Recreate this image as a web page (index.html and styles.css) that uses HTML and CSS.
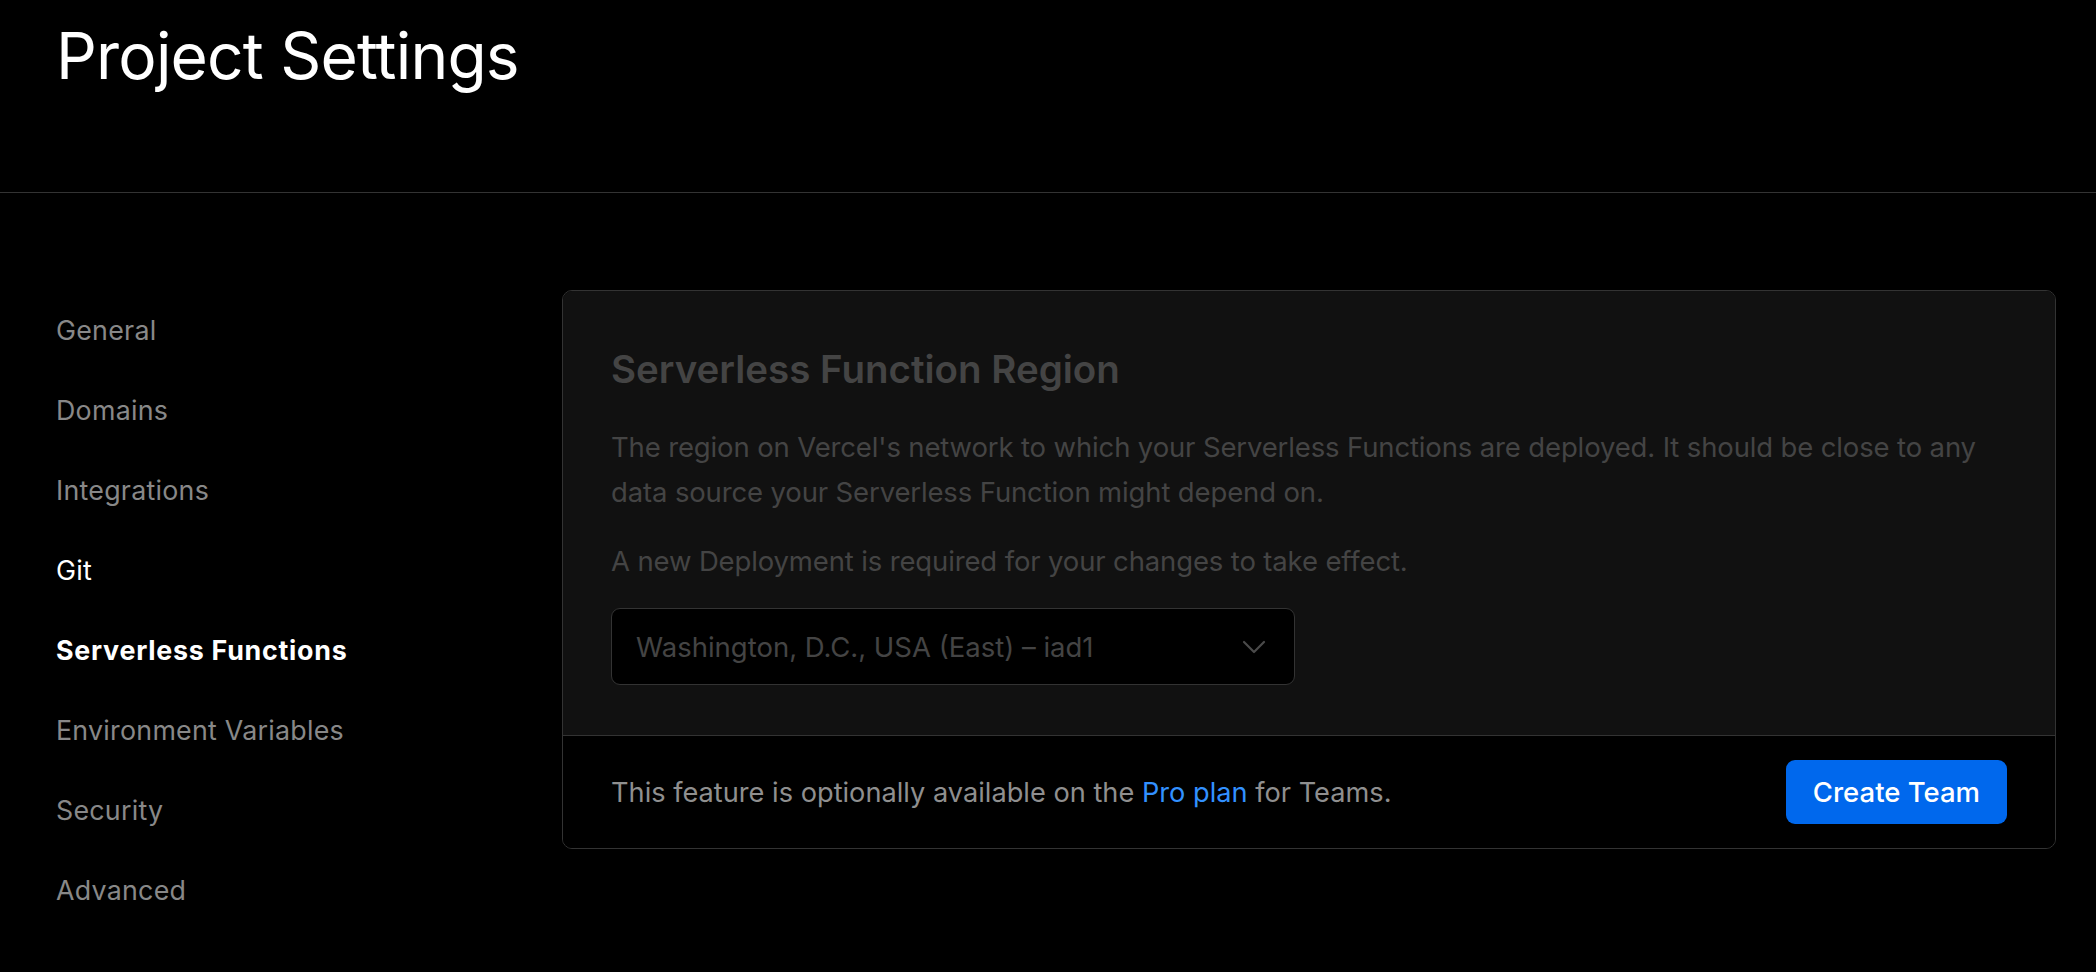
FILE: index.html
```html
<!DOCTYPE html>
<html lang="en">
<head>
<meta charset="utf-8">
<title>Project Settings</title>
<link rel="stylesheet" href="styles.css">
</head>
<body>
<header class="page-header">
  <h1 class="page-title">Project Settings</h1>
</header>
<div class="layout">
  <nav class="sidebar">
    <a class="nav-item">General</a>
    <a class="nav-item">Domains</a>
    <a class="nav-item">Integrations</a>
    <a class="nav-item nav-item--light">Git</a>
    <a class="nav-item nav-item--active">Serverless Functions</a>
    <a class="nav-item">Environment Variables</a>
    <a class="nav-item">Security</a>
    <a class="nav-item">Advanced</a>
  </nav>
  <main class="content">
    <section class="card">
      <div class="card-body">
        <h2 class="card-title">Serverless Function Region</h2>
        <p class="card-text">The region on Vercel's network to which your Serverless Functions are deployed. It should be close to any data source your Serverless Function might depend on.</p>
        <p class="card-text">A new Deployment is required for your changes to take effect.</p>
        <div class="select">
          <span class="select-value">Washington, D.C., USA (East) – iad1</span>
          <svg class="select-chevron" viewBox="0 0 24 24" width="40" height="40" fill="none" stroke="currentColor" stroke-width="1.3" stroke-linecap="round" stroke-linejoin="round"><path d="M6 9l6 6 6-6"/></svg>
        </div>
      </div>
      <div class="card-footer">
        <p class="footer-text">This feature is optionally available on the <a class="link">Pro plan</a> for Teams.</p>
        <button class="btn-primary" type="button">Create Team</button>
      </div>
    </section>
  </main>
</div>
</body>
</html>
```

FILE: styles.css
```css
* { box-sizing: border-box; }

html, body {
  margin: 0;
  padding: 0;
  background: #000;
  color: #fff;
  font-family: Inter, "Noto Sans", "Liberation Sans", sans-serif;
}

.page-header {
  height: 193px;
  border-bottom: 1px solid #333;
  padding: 24px 40px 0 56px;
}

.page-title {
  margin: 0;
  font-size: 64px;
  line-height: 64px;
  font-weight: 400;
  letter-spacing: -0.8px;
  color: #fff;
}

.layout {
  display: grid;
  grid-template-columns: 506px 1fr;
  padding: 96px 40px 0 56px;
}

.sidebar {
  display: flex;
  flex-direction: column;
  padding-top: 1px;
}

.nav-item {
  display: block;
  font-size: 26.8px;
  line-height: 80px;
  height: 80px;
  color: #888;
  text-decoration: none;
  letter-spacing: 0.25px;
}

.nav-item--light { color: #fff; }

.nav-item--active {
  color: #fff;
  font-weight: 700;
  letter-spacing: 0.75px;
}

.content {
  padding-top: 1px;
}

.card {
  border: 1px solid #333;
  border-radius: 10px;
  overflow: hidden;
  background: #000;
}

.card-body {
  background: #111;
  padding: 51px 48px 50px 48px;
}

.card-title {
  margin: 0 0 29px 0;
  font-size: 38.5px;
  line-height: 54px;
  font-weight: 600;
  letter-spacing: 0;
  color: #444;
}

.card-text {
  margin: 0 0 24px 0;
  font-size: 27.5px;
  line-height: 45px;
  color: #444;
  letter-spacing: -0.14px;
}

.select {
  width: 684px;
  height: 77px;
  border: 1px solid #333;
  border-radius: 9px;
  background: #000;
  display: flex;
  align-items: center;
  justify-content: space-between;
  padding: 0 20px 0 24px;
}

.select-value {
  font-size: 27.5px;
  color: #444;
}

.select-chevron {
  color: #4a4a4a;
  display: block;
}

.card-footer {
  border-top: 1px solid #333;
  background: #000;
  padding: 24px 48px;
  display: flex;
  align-items: center;
  justify-content: space-between;
}

.footer-text {
  margin: 0;
  font-size: 27.2px;
  color: #8f8f8f;
}

.link {
  color: #3291ff;
  text-decoration: none;
}

.btn-primary {
  height: 64px;
  padding: 0 27px;
  border: none;
  border-radius: 9px;
  background: #0068ed;
  color: #fff;
  font-family: inherit;
  font-size: 27.5px;
  font-weight: 500;
}
```
